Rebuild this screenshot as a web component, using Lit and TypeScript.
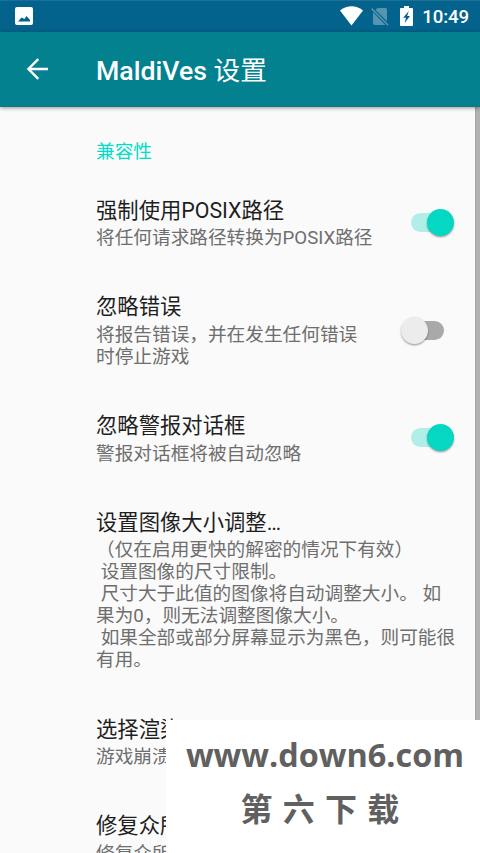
import { LitElement, html, css, nothing } from "lit";
import { customElement, property } from "lit/decorators.js";

interface Pref {
  title: string;
  summary: string;
  on?: boolean;
}

const PREFS: Pref[] = [
  { title: "强制使用POSIX路径", summary: "将任何请求路径转换为POSIX路径", on: true },
  { title: "忽略错误", summary: "将报告错误，并在发生任何错误\n时停止游戏", on: false },
  { title: "忽略警报对话框", summary: "警报对话框将被自动忽略", on: true },
  {
    title: "设置图像大小调整…",
    summary:
      "（仅在启用更快的解密的情况下有效）\n 设置图像的尺寸限制。\n 尺寸大于此值的图像将自动调整大小。 如\n果为0，则无法调整图像大小。\n 如果全部或部分屏幕显示为黑色，则可能很\n有用。",
  },
  { title: "选择渲染", summary: "游戏崩溃" },
  { title: "修复众所", summary: "修复众所" },
];

@customElement("pref-switch")
export class PrefSwitch extends LitElement {
  @property({ type: Boolean, reflect: true }) on = false;

  static styles = css`
    :host {
      display: flex;
      align-items: center;
      justify-content: center;
      width: 54px;
      height: 27px;
      flex: none;
    }
    .track {
      display: flex;
      align-items: center;
      width: 33px;
      height: 19px;
      border-radius: 10px;
      background: #a9a9a9;
    }
    .thumb {
      flex: none;
      width: 27px;
      height: 27px;
      margin-left: -10px;
      border-radius: 50%;
      background: #ececec;
      box-shadow: 0 1.3px 2px rgba(0, 0, 0, 0.36);
    }
    :host([on]) .track {
      background: #afefe7;
    }
    :host([on]) .thumb {
      margin-left: 16.5px;
      background: #04d8c3;
    }
  `;

  render() {
    return html`<div class="track"><div class="thumb"></div></div>`;
  }
}

@customElement("app-root")
export class AppRoot extends LitElement {
  static styles = css`
    :host {
      display: flex;
      flex-direction: column;
      position: relative;
      width: 480px;
      height: 853px;
      overflow: hidden;
      background: #fafafa;
      font-family: Roboto, "Noto Sans CJK SC", sans-serif;
    }
    .status {
      display: flex;
      align-items: center;
      flex: none;
      box-sizing: border-box;
      height: 32px;
      padding: 0 11px 0 15px;
      background: #04638c;
      border-top: 1px solid #1c7096;
      color: #fff;
    }
    .status svg {
      display: block;
      flex: none;
      margin-bottom: 1px;
    }
    .spacer {
      flex: 1;
    }
    .status .wifi {
      margin-right: 8px;
      margin-bottom: 2px;
    }
    .sim {
      margin-right: 11px;
    }
    .status .battery {
      margin-right: 9px;
      margin-bottom: 2px;
    }
    .clock {
      font-size: 18.67px;
      font-weight: 500;
      line-height: 30px;
      padding-top: 1px;
      letter-spacing: -0.1px;
    }
    .bar {
      display: flex;
      align-items: center;
      flex: none;
      height: 75px;
      box-sizing: border-box;
      padding: 0 0 0 26px;
      background: #03818f;
      color: #fff;
      border-bottom: 1px solid #147680;
      box-shadow: 0 1px 4px rgba(0, 0, 0, 0.4);
      z-index: 1;
    }
    .back {
      display: block;
      margin-right: 47px;
    }
    .heading {
      font-size: 26.67px;
      font-weight: 500;
      line-height: 40px;
      padding-top: 3px;
    }
    .cjk {
      font-weight: 400;
    }
    .body {
      display: flex;
      flex: 1;
      min-height: 0;
    }
    .list {
      flex: 1;
      min-width: 0;
      overflow: hidden;
      padding-left: 96px;
    }
    .scroll {
      flex: none;
      width: 4px;
      background: #b2b2b2;
      border-left: 1px solid #a4a4a4;
    }
    .category {
      height: 67.4px;
      box-sizing: border-box;
      padding-top: 31px;
      font-size: 18.67px;
      line-height: 28px;
      color: #04dcc7;
    }
    .row {
      display: flex;
      align-items: center;
      padding: 21.33px 21px 22px 0;
    }
    .texts {
      flex: 1;
      min-width: 0;
    }
    .title {
      font-size: 21.33px;
      line-height: 30px;
      margin-bottom: 1.4px;
      color: #1e1e1e;
      white-space: nowrap;
    }
    .summary {
      font-size: 18.67px;
      line-height: 22px;
      color: #6e6e6e;
      white-space: pre;
    }
    .mark {
      position: absolute;
      left: 166px;
      top: 720px;
      width: 314px;
      height: 133px;
      background: #fff;
      color: #606060;
      display: flex;
      flex-direction: column;
      align-items: center;
      box-sizing: border-box;
      padding: 9px 0 0 4px;
      z-index: 2;
      white-space: nowrap;
    }
    .url {
      font: 700 32.4px/50px "Open Sans", sans-serif;
    }
    .site {
      font: 700 32px/46px "Noto Sans CJK SC", sans-serif;
      letter-spacing: 10.3px;
      padding-top: 5px;
    }
  `;

  private row(p: Pref) {
    return html`<div class="row">
      <div class="texts">
        <div class="title">${p.title}</div>
        <div class="summary">${p.summary}</div>
      </div>
      ${p.on === undefined ? nothing : html`<pref-switch ?on=${p.on}></pref-switch>`}
    </div>`;
  }

  render() {
    return html`
      <div class="status">
        <svg width="18" height="18" viewBox="0 0 18 18">
          <path fill="#fff" fill-rule="evenodd" d="M2 0H16Q18 0 18 2V16Q18 18 16 18H2Q0 18 0 16V2Q0 0 2 0ZM3 14.5H15V13L11.5 9L9.5 12L6.5 10.5Z" />
        </svg>
        <div class="spacer"></div>
        <svg class="wifi" width="23" height="20" viewBox="0 0 23 20">
          <path fill="#fff" d="M0 4.5Q11.5-3.8 23 4.5L11.5 19.5Z" />
        </svg>
        <svg class="sim" width="18" height="19" viewBox="0 0 18 19">
          <path fill="#5794b0" d="M6.5 1H14.5Q16 1 16 2.5V14.2L4.5 3Z M2 5.3L14.4 18H4Q2 18 2 16Z" />
          <path stroke="#5794b0" stroke-width="1.5" d="M.6 1.6L17.2 18.3" />
        </svg>
        <svg class="battery" width="13" height="20" viewBox="0 0 13 20">
          <path fill="#fff" fill-rule="evenodd" d="M4 0H9V2H12Q13 2 13 3V19Q13 20 12 20H1Q0 20 0 19V3Q0 2 1 2H4ZM8.8 5L3.2 11.7H6L4.7 17L10 10H7.2Z" />
        </svg>
        <div class="clock">10:49</div>
      </div>
      <div class="bar">
        <svg class="back" width="23" height="22" viewBox="0 0 23 22">
          <path fill="none" stroke="#fff" stroke-width="2.4" d="M12.3 1.2L2.4 11L12.3 20.8M2.4 11H22" />
        </svg>
        <div class="heading">MaldiVes <span class="cjk">设置</span></div>
      </div>
      <div class="body">
        <div class="list">
          <div class="category">兼容性</div>
          ${PREFS.map((p) => this.row(p))}
        </div>
        <div class="scroll"></div>
      </div>
      <div class="mark">
        <div class="url">www.down6.com</div>
        <div class="site">第六下载</div>
      </div>
    `;
  }
}
